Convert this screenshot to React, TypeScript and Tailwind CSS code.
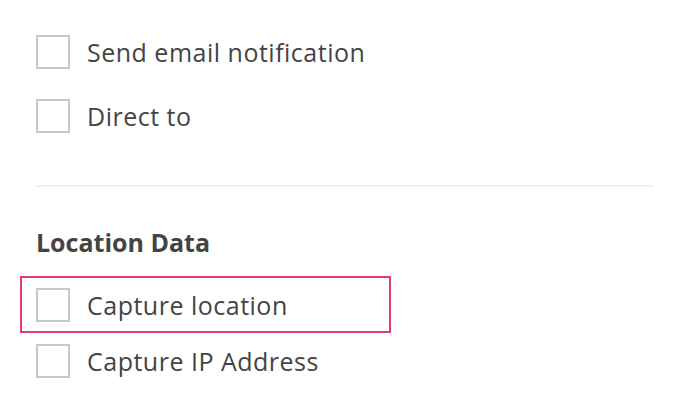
export default function App() {
    const font = { fontFamily: "'Open Sans', sans-serif" };
    return (
        <div className="w-[680px] h-[413px] bg-white text-[#444] pl-[36px] pr-[26px] pt-[35px]" style={font}>
            <div className="flex flex-col gap-[30px]">
                <Row label="Send email notification" />
                <Row label="Direct to" />
            </div>
            <div className="mt-[52px] h-[2px] bg-[#f0f0f0]" />
            <h2 className="mt-[43px] text-[25px] font-bold leading-[24px] text-[#444]">Location Data</h2>
            <div className="mt-[22px] -ml-[16px] w-[371px] border-2 border-[#e33a78] pl-[14px] pt-[10px] pb-[9px]">
                <Row label="Capture location" />
            </div>
            <div className="mt-[11px]">
                <Row label="Capture IP Address" />
            </div>
        </div>
    );
}

function Row({ label }: { label: string }) {
    return (
        <label className="flex items-center gap-[17px] h-[34px]">
            <span className="w-[34px] h-[34px] border-2 border-[#c8c8cc] bg-white shrink-0" />
            <span className="text-[25px] leading-[34px] tracking-[0.5px] text-[#444] whitespace-nowrap">{label}</span>
        </label>
    );
}
